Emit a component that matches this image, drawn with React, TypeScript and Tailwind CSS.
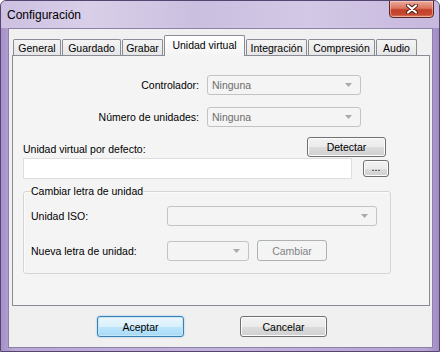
import React from 'react';

const font = "font-['Liberation_Sans',Arial,sans-serif]";

const tabs = [
  { label: 'General', w: 'w-[48px]' },
  { label: 'Guardado', w: 'w-[59px]' },
  { label: 'Grabar', w: 'w-[41px]' },
  { label: 'Unidad virtual', w: 'w-[81px]', active: true },
  { label: 'Integración', w: 'w-[61px]' },
  { label: 'Compresión', w: 'w-[67px]' },
  { label: 'Audio', w: 'w-[41px]' },
];

const Arrow = () => (
  <svg width="7" height="4" viewBox="0 0 7 4" className="shrink-0">
    <path d="M0 0h7L3.5 4z" fill="#a9a9a9" />
  </svg>
);

const Combo = ({ w, text }: { w: string; text?: string }) => (
  <div className={`${w} h-[20px] border border-[#c3c3c3] rounded-[3px] bg-[#f4f4f4] flex items-center pl-[4px] pr-[8px]`}>
    <span className="flex-1 text-[#6d6d6d]">{text}</span>
    <Arrow />
  </div>
);

const Button = ({ w, h, children, variant = 'normal' }: { w: string; h: string; children: React.ReactNode; variant?: 'normal' | 'default' | 'disabled' }) => {
  const styles = {
    normal: 'border-[#707070] bg-[linear-gradient(#f2f2f2_0%,#ebebeb_50%,#dddddd_51%,#cfcfcf_100%)] text-black shadow-[inset_0_0_0_1px_#fcfcfc]',
    default: 'border-[#3c7fb1] bg-[linear-gradient(#eaf6fd_0%,#d9f0fc_50%,#bee6fd_51%,#a7d9f5_100%)] text-black shadow-[inset_0_0_0_1px_#c4e6f7,0_0_2px_#7fc3ea]',
    disabled: 'border-[#adb2b5] bg-[#f4f4f4] text-[#838383]',
  }[variant];
  return (
    <div className={`${w} ${h} border rounded-[3px] flex items-center justify-center ${styles}`}>{children}</div>
  );
};

export default function App() {
  return (
    <div className={`${font} text-[10.5px] leading-[12px] w-[440px] h-[352px] bg-[linear-gradient(90deg,#a690c8_0%,#b9a8d6_3%,#c2b3dc_50%,#b7a5d4_97%,#a18bc4_100%)] border border-[#54466e] rounded-t-[6px] flex flex-col overflow-hidden`}>
      {/* title bar */}
      <div className="h-[27px] flex shrink-0 bg-[linear-gradient(90deg,#cdc0e2_0%,#d9cfe8_20%,#cbbfe0_45%,#d3c8e5_70%,#c7b8de_100%)]">
        <span className="pl-[6px] pt-[7px] text-[12px] leading-[14px] text-black">Configuración</span>
        <div className="ml-auto mr-[5px] w-[45px] h-[18px] -mt-px border border-[#5b2622] rounded-b-[4px] bg-[linear-gradient(#ecac9c_0%,#d9735e_45%,#c2402a_55%,#c84a32_85%,#de8a6c_100%)] flex items-center justify-center shadow-[inset_0_0_0_1px_rgba(255,220,210,0.5)]">
          <svg width="12" height="10" viewBox="0 0 12 10">
            <path d="M2 1.5l8 7M10 1.5l-8 7" stroke="#4a1a14" strokeWidth="4" strokeLinecap="round" />
            <path d="M2 1.5l8 7M10 1.5l-8 7" stroke="#ffffff" strokeWidth="2.2" strokeLinecap="round" />
          </svg>
        </div>
      </div>

      {/* client area */}
      <div className="ml-[7px] mr-[6px] mb-[3px] flex-1 border border-[#8d80a6] bg-[#f0f0f0] flex flex-col">
        {/* tabs */}
        <div className="mt-[6px] ml-[4px] h-[20px] flex items-end gap-[1px]">
          {tabs.map((t) =>
            t.active ? (
              <div key={t.label} className={`${t.w} h-[21px] -mb-px relative z-10 border border-b-0 border-[#898c95] bg-[linear-gradient(#ffffff,#f4f4f4)] flex items-center justify-center pb-[3px] rounded-t-[2px]`}>
                {t.label}
              </div>
            ) : (
              <div key={t.label} className={`${t.w} h-[16px] border border-b-0 border-[#898c95] bg-[linear-gradient(#f4f4f4,#e6e6e6)] flex items-center justify-center rounded-t-[2px]`}>
                {t.label}
              </div>
            )
          )}
        </div>

        {/* tab page */}
        <div className="ml-[3px] mr-[2px] h-[251px] border border-[#898c95] bg-[#f4f4f4] flex flex-col shrink-0">
          <div className="mt-[19px] flex items-center">
            <span className="w-[186px] text-right">Controlador:</span>
            <div className="ml-[8px]"><Combo w="w-[154px]" text="Ninguna" /></div>
          </div>
          <div className="mt-[12px] flex items-center">
            <span className="w-[186px] text-right">Número de unidades:</span>
            <div className="ml-[8px]"><Combo w="w-[154px]" text="Ninguna" /></div>
          </div>

          <div className="mt-[10px] flex items-center pl-[10px]">
            <span className="pt-[4px]">Unidad virtual por defecto:</span>
            <div className="ml-auto mr-[43px]">
              <Button w="w-[79px]" h="h-[20px]">Detectar</Button>
            </div>
          </div>
          <div className="mt-[1px] flex items-center pl-[10px]">
            <div className="w-[329px] h-[21px] bg-white border border-[#dedede]" />
            <div className="ml-[11px]">
              <Button w="w-[26px]" h="h-[17px]">
                <span className="-mt-[3px]">...</span>
              </Button>
            </div>
          </div>

          <fieldset className="mt-[6px] ml-[10px] w-[368px] h-[89px] border border-[#d5d5d5] rounded-[3px] shadow-[inset_1px_1px_0_#fbfbfb]">
            <legend className="ml-[7px] leading-[12px]">Cambiar letra de unidad</legend>
            <div className="mt-[9px] flex items-center pl-[7px]">
              <span className="w-[136px]">Unidad ISO:</span>
              <Combo w="w-[210px]" />
            </div>
            <div className="mt-[14px] flex items-center pl-[7px]">
              <span className="w-[136px]">Nueva letra de unidad:</span>
              <Combo w="w-[82px]" />
              <div className="ml-[8px]">
                <Button w="w-[70px]" h="h-[21px]" variant="disabled">Cambiar</Button>
              </div>
            </div>
          </fieldset>
        </div>

        {/* dialog buttons */}
        <div className="mt-[10px] flex pl-[88px]">
          <Button w="w-[87px]" h="h-[21px]" variant="default">Aceptar</Button>
          <div className="ml-[56px]">
            <Button w="w-[87px]" h="h-[21px]">Cancelar</Button>
          </div>
        </div>
      </div>
    </div>
  );
}
